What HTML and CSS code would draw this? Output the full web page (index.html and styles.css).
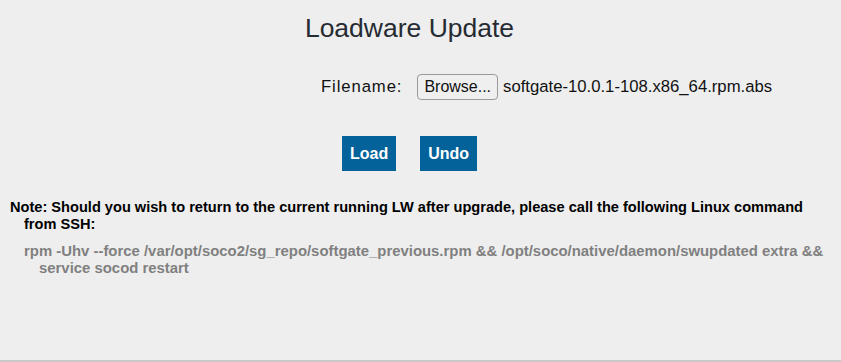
FILE: index.html
```html
<!DOCTYPE html>
<html>
<head>
<meta charset="utf-8">
<link rel="stylesheet" href="styles.css">
</head>
<body>
<div class="page">
  <div class="main">
    <h1 class="title">Loadware Update</h1>
    <div class="file-row">
      <span class="label">Filename:</span>
      <span class="browse">Browse...</span>
      <span class="fname">softgate-10.0.1-108.x86_64.rpm.abs</span>
    </div>
    <div class="actions">
      <span class="btn">Load</span>
      <span class="btn">Undo</span>
    </div>
  </div>
  <p class="note">Note: Should you wish to return to the current running LW after upgrade, please call the following Linux command from SSH:</p>
  <p class="cmd">rpm -Uhv --force /var/opt/soco2/sg_repo/softgate_previous.rpm &amp;&amp; /opt/soco/native/daemon/swupdated extra &amp;&amp; service socod restart</p>
</div>
</body>
</html>
```
FILE: styles.css
```css
html, body {
  margin: 0;
  padding: 0;
  background: #eeeeee;
}
body {
  font-family: "Liberation Sans", Arial, sans-serif;
}
.page {
  height: 360px;
  border-bottom: 2px solid #c8c8c8;
  overflow: hidden;
}
.main {
  width: 819px;
}
.title {
  margin: 0;
  padding-top: 13px;
  text-align: center;
  font-size: 26.5px;
  font-weight: normal;
  color: #262b33;
  line-height: 30px;
}
.file-row {
  display: flex;
  align-items: center;
  margin-top: 31px;
  padding-left: 321px;
  font-size: 16.7px;
  color: #111;
}
.label {
  letter-spacing: 0.9px;
  margin-right: 15px;
}
.browse {
  display: inline-block;
  height: 24px;
  line-height: 24px;
  padding: 0 6px;
  font-size: 16px;
  border: 1px solid #9a9a9a;
  border-radius: 4px;
  background: #efefef;
  margin-right: 5px;
}
.actions {
  display: flex;
  justify-content: center;
  gap: 24px;
  margin-top: 36px;
}
.btn {
  display: inline-block;
  height: 35px;
  line-height: 36px;
  padding: 0 8px;
  background: #03629a;
  color: #fff;
  font-weight: bold;
  font-size: 16px;
}
.note {
  margin: 28px 0 0 0;
  padding-left: 24px;
  padding-right: 20px;
  text-indent: -14px;
  font-size: 14.6px;
  font-weight: bold;
  line-height: 17px;
  color: #000;
}
.cmd {
  margin: 10px 0 0 0;
  padding-left: 39px;
  padding-right: 10px;
  text-indent: -15px;
  font-size: 14.9px;
  font-weight: bold;
  line-height: 17px;
  color: #808080;
}
```
